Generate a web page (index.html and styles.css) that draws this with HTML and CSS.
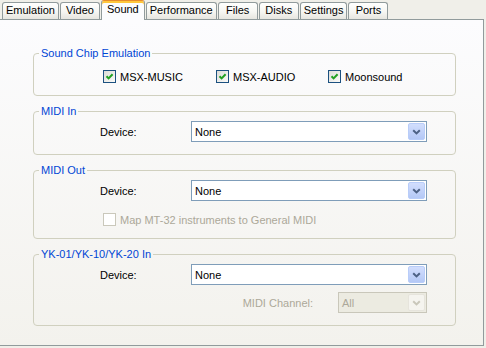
FILE: index.html
```html
<!DOCTYPE html>
<html lang="en">
<head>
    <meta charset="UTF-8">
    <title>Sound Settings</title>
    <link rel="stylesheet" href="styles.css">
</head>
<body>
  <div class="tabs">
    <div class="tab">Emulation</div>
    <div class="tab">Video</div>
    <div class="tab active">Sound</div>
    <div class="tab">Performance</div>
    <div class="tab">Files</div>
    <div class="tab">Disks</div>
    <div class="tab">Settings</div>
    <div class="tab">Ports</div>
  </div>

  <div class="page">
    <fieldset class="group chips">
      <legend>Sound Chip Emulation</legend>
      <div class="chip-row">
        <label class="check">
          <span class="box"><svg viewBox="0 0 11 11"><path d="M2.5 5.2 L4.6 7.4 L8.6 3.2" /></svg></span>
          MSX-MUSIC
        </label>
        <label class="check">
          <span class="box"><svg viewBox="0 0 11 11"><path d="M2.5 5.2 L4.6 7.4 L8.6 3.2" /></svg></span>
          MSX-AUDIO
        </label>
        <label class="check">
          <span class="box"><svg viewBox="0 0 11 11"><path d="M2.5 5.2 L4.6 7.4 L8.6 3.2" /></svg></span>
          Moonsound
        </label>
      </div>
    </fieldset>

    <fieldset class="group">
      <legend>MIDI In</legend>
      <div class="field">
        <span>Device:</span>
        <div class="combo">
          <span>None</span>
          <span class="drop"><svg viewBox="0 0 9 6"><path d="M1.2 1.2 L4.5 4.4 L7.8 1.2" /></svg></span>
        </div>
      </div>
    </fieldset>

    <fieldset class="group">
      <legend>MIDI Out</legend>
      <div class="field">
        <span>Device:</span>
        <div class="combo">
          <span>None</span>
          <span class="drop"><svg viewBox="0 0 9 6"><path d="M1.2 1.2 L4.5 4.4 L7.8 1.2" /></svg></span>
        </div>
      </div>
      <label class="check disabled map-check">
        <span class="box"></span>
        Map MT-32 instruments to General MIDI
      </label>
    </fieldset>

    <fieldset class="group">
      <legend>YK-01/YK-10/YK-20 In</legend>
      <div class="field">
        <span>Device:</span>
        <div class="combo">
          <span>None</span>
          <span class="drop"><svg viewBox="0 0 9 6"><path d="M1.2 1.2 L4.5 4.4 L7.8 1.2" /></svg></span>
        </div>
      </div>
      <div class="channel-row">
        <span>MIDI Channel:</span>
        <div class="combo disabled">
          <span>All</span>
          <span class="drop"><svg viewBox="0 0 9 6"><path d="M1.2 1.2 L4.5 4.4 L7.8 1.2" /></svg></span>
        </div>
      </div>
    </fieldset>
  </div>
</body>
</html>
```

FILE: styles.css
```css
* {
    box-sizing: border-box;
}

body {
    margin: 0;
    width: 486px;
    height: 348px;
    overflow: hidden;
    background: #f0efe9;
    font-family: 'Liberation Sans', Arial, sans-serif;
    font-size: 11px;
    color: #000;
}

/* tab strip */
.tabs {
    display: flex;
    align-items: flex-end;
    height: 19px;
    padding-left: 2px;
}

.tab {
    height: 17px;
    min-width: 40px;
    padding: 0 3px;
    margin-right: 1px;
    line-height: 15px;
    text-align: center;
    border: 1px solid #919b9c;
    border-bottom: none;
    border-radius: 3px 3px 0 0;
    background: linear-gradient(#fffffe, #f6f6f2 55%, #e6e5df);
    white-space: nowrap;
}

.tab.active {
    position: relative;
    z-index: 1;
    height: 20px;
    padding: 1px 5px 0;
    margin-bottom: -1px;
    line-height: 14px;
    border-top: 1px solid #e68b2c;
    box-shadow: inset 0 2px #ffc73c;
    background: #fcfcfe;
}

/* page */
.page {
    width: 484px;
    height: 327px;
    border: 1px solid #919b9c;
    border-left: none;
    background: linear-gradient(#fcfcfe, #f3f2ed);
    padding: 27px 27px 0 33px;
    display: flex;
    flex-direction: column;
    gap: 9px;
}

.group {
    margin: 0;
    min-width: 0;
    border: 1px solid #d0d0bf;
    border-radius: 4px;
    padding: 3px 0 12px 0;
}

.group legend {
    margin-left: 5px;
    padding: 0 2px;
    line-height: 13px;
    color: #0046d5;
}

.chips {
    padding-top: 10px;
}

.chip-row {
    display: grid;
    grid-template-columns: 113px 112px auto;
    margin-left: 69px;
    height: 13px;
}

/* checkboxes */
.check {
    display: flex;
    align-items: center;
    gap: 4px;
    height: 13px;
    white-space: nowrap;
}

.check .box {
    width: 13px;
    height: 13px;
    flex: none;
    border: 1px solid #1c5180;
    background: linear-gradient(135deg, #dcdcd7, #fbfbf9);
}

.check .box svg {
    display: block;
    width: 11px;
    height: 11px;
    fill: none;
    stroke: #21a121;
    stroke-width: 2;
}

.check.disabled {
    color: #aca899;
}

.check.disabled .box {
    border-color: #cac8bb;
    background: #fff;
}

.map-check {
    margin: 12px 0 0 69px;
}

/* device rows */
.field {
    display: grid;
    grid-template-columns: 91px 236px;
    align-items: center;
    margin-left: 66px;
}

.combo {
    height: 21px;
    border: 1px solid #7f9db9;
    background: #fff;
    display: flex;
    align-items: center;
    justify-content: space-between;
    padding: 0 1px 0 3px;
}

.combo .drop {
    width: 17px;
    height: 17px;
    border: 1px solid #b9cdf9;
    border-radius: 2px;
    background: linear-gradient(#d2defd, #b4c8f6);
    display: flex;
    align-items: center;
    justify-content: center;
}

.combo .drop svg {
    width: 9px;
    height: 6px;
    fill: none;
    stroke: #4d6185;
    stroke-width: 2;
}

.channel-row {
    display: flex;
    justify-content: flex-end;
    align-items: center;
    gap: 25px;
    width: 327px;
    margin: 7px 0 0 66px;
    color: #aca899;
}

.combo.disabled {
    width: 89px;
    border-color: #c9c7ba;
    background: #ecebe1;
    color: #aca899;
}

.combo.disabled .drop {
    border-color: #e6e4dc;
    background: #f5f4ef;
}

.combo.disabled .drop svg {
    stroke: #c9c7ba;
}
```
